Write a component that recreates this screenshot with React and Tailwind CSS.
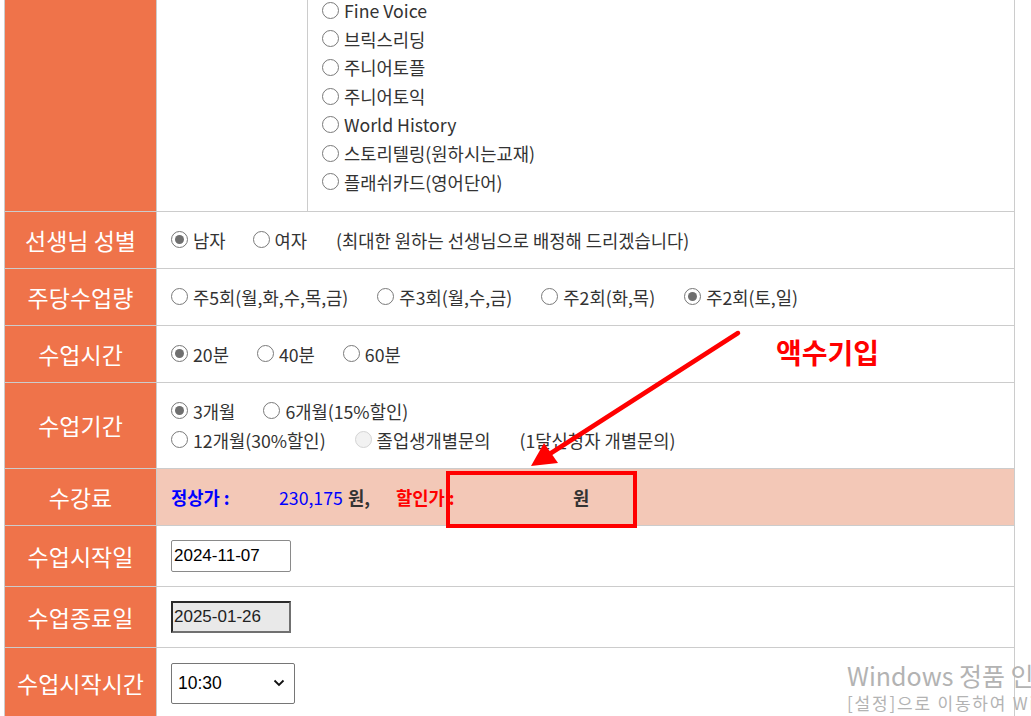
import React from "react";

const KR = { fontFamily: '"Noto Sans CJK KR", "Noto Sans", sans-serif' };

function Radio({ checked, disabled }) {
  if (disabled) {
    return (
      <span className="inline-flex w-[17px] h-[17px] shrink-0 rounded-full border border-[#d4d4d4] bg-[#f2f2f2]" />
    );
  }
  return (
    <span
      className={
        "inline-flex w-[17px] h-[17px] shrink-0 items-center justify-center rounded-full bg-white border " +
        (checked ? "border-[#767676] border-[1.5px]" : "border-[#7a7a7a]")
      }
    >
      {checked && <span className="w-[9px] h-[9px] rounded-full bg-[#6f6f6f]" />}
    </span>
  );
}

function Opt({ checked, disabled, children }) {
  return (
    <span className="inline-flex items-center gap-[5px] whitespace-nowrap">
      <Radio checked={checked} disabled={disabled} />
      <span>{children}</span>
    </span>
  );
}

function Row({ label, h, children, contentClass = "" }) {
  return (
    <div className={"flex border-b border-[#cccccc] " + h}>
      <div className="w-[151px] shrink-0 bg-[#ef734a] flex items-center justify-center text-white text-[23px] whitespace-nowrap">
        {label}
      </div>
      <div className={"flex-1 border-l border-[#cccccc] flex items-center pl-[14px] " + contentClass}>
        {children}
      </div>
    </div>
  );
}

export default function App() {
  const books = [
    "Fine Voice",
    "브릭스리딩",
    "주니어토플",
    "주니어토익",
    "World History",
    "스토리텔링(원하시는교재)",
    "플래쉬카드(영어단어)",
  ];
  const mono = { fontFamily: '"Liberation Sans", Arial, sans-serif' };
  return (
    <div className="relative w-[1031px] h-[716px] overflow-hidden bg-white text-[#333333] text-[17.7px]" style={KR}>
      <div className="ml-[4px] w-[1011px] border-x border-[#cccccc]">
        {/* top row */}
        <div className="flex h-[212px] border-b border-[#cccccc]">
          <div className="w-[151px] shrink-0 bg-[#ef734a]" />
          <div className="flex-1 border-l border-[#cccccc] flex">
            <div className="w-[151px] shrink-0 border-r border-[#cccccc]" />
            <div className="pl-[14px] -mt-[4px] flex flex-col">
              {books.map((b) => (
                <div key={b} className="h-[28.6px] flex items-center">
                  <Opt>{b}</Opt>
                </div>
              ))}
            </div>
          </div>
        </div>

        <Row label="선생님 성별" h="h-[57px]">
          <div className="flex items-center gap-[27px]">
            <Opt checked>남자</Opt>
            <Opt>여자</Opt>
            <span className="ml-[2px]">(최대한 원하는 선생님으로 배정해 드리겠습니다)</span>
          </div>
        </Row>

        <Row label="주당수업량" h="h-[57px]">
          <div className="flex items-center gap-[29px]">
            <Opt>주5회(월,화,수,목,금)</Opt>
            <Opt>주3회(월,수,금)</Opt>
            <Opt>주2회(화,목)</Opt>
            <Opt checked>주2회(토,일)</Opt>
          </div>
        </Row>

        <Row label="수업시간" h="h-[57px]">
          <div className="flex items-center gap-[28px]">
            <Opt checked>20분</Opt>
            <Opt>40분</Opt>
            <Opt>60분</Opt>
          </div>
        </Row>

        <Row label="수업기간" h="h-[86px]">
          <div className="flex flex-col">
            <div className="h-[29px] flex items-center gap-[28px]">
              <Opt checked>3개월</Opt>
              <Opt>6개월(15%할인)</Opt>
            </div>
            <div className="h-[29px] flex items-center gap-[29px]">
              <Opt>12개월(30%할인)</Opt>
              <Opt disabled>졸업생개별문의</Opt>
              <span>(1달신청자 개별문의)</span>
            </div>
          </div>
        </Row>

        <Row label="수강료" h="h-[57px]" contentClass="bg-[#f3c8b7]">
          <div className="flex items-center whitespace-nowrap">
            <span className="font-bold text-[#0000ff] w-[108px]">정상가 :</span>
            <span className="text-[#0000ff] w-[69px]">230,175</span>
            <span className="font-bold w-[48px]">원,</span>
            <span className="font-bold text-[#ff0000] w-[177px]">할인가 :</span>
            <span className="font-bold">원</span>
          </div>
        </Row>

        <Row label="수업시작일" h="h-[61px]">
          <div
            className="w-[120px] h-[32px] border border-[#8a8a8a] rounded-[2px] bg-white flex items-center pl-[2px] text-[17px] text-black"
            style={mono}
          >
            2024-11-07
          </div>
        </Row>

        <Row label="수업종료일" h="h-[61px]">
          <div
            className="w-[120px] h-[32px] border-2 border-t-[#2a2a2a] border-l-[#2a2a2a] border-b-[#707070] border-r-[#707070] bg-[#e9e9e9] flex items-center pl-[1px] text-[17px] text-[#222]"
            style={mono}
          >
            2025-01-26
          </div>
        </Row>

        <Row label="수업시작시간" h="h-[71px]">
          <div
            className="w-[124px] h-[41px] border border-[#767676] rounded-[2px] bg-white flex items-center justify-between pl-[6px] pr-[9px] text-[17.5px] text-black"
            style={mono}
          >
            <span>10:30</span>
            <svg width="12" height="8" viewBox="0 0 12 8">
              <path d="M1.5 1.5 L6 6 L10.5 1.5" fill="none" stroke="#111" strokeWidth="1.8" />
            </svg>
          </div>
        </Row>
      </div>

      {/* annotation: red box */}
      <div className="absolute left-[446px] top-[471px] w-[191px] h-[57px] border-[4px] border-[#ff0000]" />

      {/* annotation: arrow */}
      <svg className="absolute left-0 top-0 pointer-events-none" width="1031" height="716">
        <line x1="738" y1="333" x2="548" y2="455" stroke="#ff0000" strokeWidth="4.5" strokeLinecap="round" />
        <polygon points="531,466 544,443 558,463" fill="#ff0000" />
      </svg>

      <div className="absolute left-[776px] top-[333px] text-[28px] font-bold text-[#ff0000] leading-[38px] whitespace-nowrap">
        액수기입
      </div>

      {/* windows watermark */}
      <div className="absolute left-[847px] top-[659px] text-[#b3b3b3] pointer-events-none">
        <div className="text-[25px] leading-[32px] whitespace-nowrap">Windows 정품 인증</div>
        <div className="text-[17px] leading-[24px] tracking-[1.8px] whitespace-nowrap">[설정]으로 이동하여 Windows를 정품 인증합니다.</div>
      </div>
    </div>
  );
}
